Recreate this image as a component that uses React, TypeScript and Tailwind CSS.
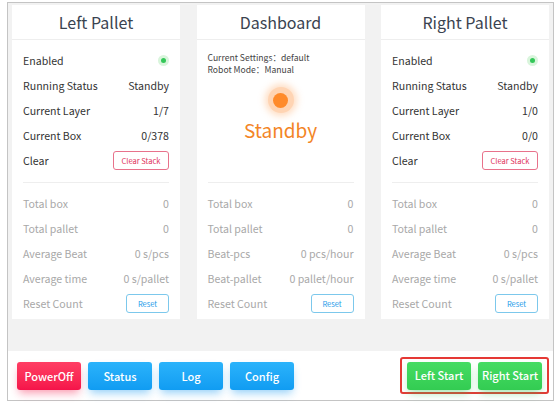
import React from "react";

const font = { fontFamily: '"Noto Sans CJK SC", "Noto Sans", sans-serif' };

type Row = { label: string; value?: React.ReactNode };

const GreenDot = () => (
  <span className="flex h-[11px] w-[11px] items-center justify-center rounded-full bg-[#d9f5dc]">
    <span className="h-[5px] w-[5px] rounded-full bg-[#34c759]" />
  </span>
);

const ClearButton = () => (
  <button className="h-[19px] w-[56px] rounded-[3px] border border-[#e8728b] bg-white text-[7.5px] leading-none text-[#e0325a]">
    Clear Stack
  </button>
);

const ResetButton = () => (
  <button className="h-[19px] w-[43px] rounded-[3px] border border-[#7cc8ec] bg-white text-[7.5px] leading-none text-[#1e9be9]">
    Reset
  </button>
);

const Rows = ({ rows, muted }: { rows: Row[]; muted?: boolean }) => (
  <div className="flex flex-col">
    {rows.map((r) => (
      <div
        key={r.label}
        className={`flex h-[25px] items-center justify-between text-[10.6px] ${muted ? "text-[#a8a8a8]" : "text-[#333]"}`}
      >
        <span>{r.label}</span>
        <span>{r.value}</span>
      </div>
    ))}
  </div>
);

const Panel = ({
  title,
  top,
  bottom,
}: {
  title: string;
  top: React.ReactNode;
  bottom: Row[];
}) => (
  <div className="flex h-[314px] w-[168px] flex-col bg-white">
    <div className="flex h-[35px] items-center justify-center border-b border-[#eeeeee] text-[16px] text-[#3a4350]">
      {title}
    </div>
    <div className="flex flex-1 flex-col px-[11px]">
      <div className="h-[143px] border-b border-[#eeeeee]">{top}</div>
      <div className="pt-[8px]">
        <Rows rows={bottom} muted />
      </div>
    </div>
  </div>
);

const palletTop = (layer: string, box: string) => (
  <div className="pt-[8px]">
    <Rows
      rows={[
        { label: "Enabled", value: <GreenDot /> },
        { label: "Running Status", value: "Standby" },
        { label: "Current Layer", value: layer },
        { label: "Current Box", value: box },
        { label: "Clear", value: <ClearButton /> },
      ]}
    />
  </div>
);

const palletBottom: Row[] = [
  { label: "Total box", value: "0" },
  { label: "Total pallet", value: "0" },
  { label: "Average Beat", value: "0 s/pcs" },
  { label: "Average time", value: "0 s/pallet" },
  { label: "Reset Count", value: <ResetButton /> },
];

const dashboardTop = (
  <div className="flex flex-col pt-[11px]">
    <div className="text-[8.6px] leading-[12px] text-[#444]">Current Settings：default</div>
    <div className="text-[8.6px] leading-[12px] text-[#444]">Robot Mode：Manual</div>
    <div className="mt-[12px] flex justify-center">
      <span className="flex h-[26px] w-[26px] items-center justify-center rounded-full bg-[#ffd4b3] shadow-[0_0_7px_3px_rgba(255,180,120,0.45)]">
        <span className="h-[15px] w-[15px] rounded-full bg-[#ff8a2a]" />
      </span>
    </div>
    <div className="mt-[4px] text-center text-[19px] leading-[26px] text-[#f38526]">Standby</div>
  </div>
);

const dashboardBottom: Row[] = [
  { label: "Total box", value: "0" },
  { label: "Total pallet", value: "0" },
  { label: "Beat-pcs", value: "0 pcs/hour" },
  { label: "Beat-pallet", value: "0 pallet/hour" },
  { label: "Reset Count", value: <ResetButton /> },
];

const NavButton = ({ label, color }: { label: string; color: "red" | "blue" | "green" }) => {
  const cls =
    color === "red"
      ? "bg-gradient-to-b from-[#ff3d63] to-[#f5134a] shadow-[0_5px_8px_-2px_rgba(245,30,80,0.45)]"
      : color === "blue"
        ? "bg-gradient-to-b from-[#2ab3fb] to-[#109cf2] shadow-[0_5px_8px_-2px_rgba(20,150,240,0.45)]"
        : "bg-gradient-to-b from-[#45dc63] to-[#33cc52] shadow-[0_5px_8px_-2px_rgba(50,200,80,0.45)]";
  return (
    <button className={`h-[28px] w-[64px] rounded-[3px] text-[11px] font-medium text-white ${cls}`}>{label}</button>
  );
};

export default function App() {
  return (
    <div className="h-[404px] w-[558px] bg-white pl-[7px] pt-[2px]" style={font}>
      <div className="flex h-[399px] w-[547px] flex-col border border-[#c4c4c4] bg-[#f2f2f2]">
        <div className="flex gap-[16.5px] pl-[4px] pt-[2px]">
          <Panel title="Left Pallet" top={palletTop("1/7", "0/378")} bottom={palletBottom} />
          <Panel title="Dashboard" top={dashboardTop} bottom={dashboardBottom} />
          <Panel title="Right Pallet" top={palletTop("1/0", "0/0")} bottom={palletBottom} />
        </div>
        <div className="mt-auto flex h-[49px] items-start justify-between bg-white pl-[9px] pr-[4px] pt-[6px]">
          <div className="flex gap-[7px] pt-[5px]">
            <NavButton label="PowerOff" color="red" />
            <NavButton label="Status" color="blue" />
            <NavButton label="Log" color="blue" />
            <NavButton label="Config" color="blue" />
          </div>
          <div className="flex h-[37px] w-[149px] items-center justify-center gap-[7px] rounded-[3px] border-2 border-[#e53935]">
            <NavButton label="Left Start" color="green" />
            <NavButton label="Right Start" color="green" />
          </div>
        </div>
      </div>
    </div>
  );
}
